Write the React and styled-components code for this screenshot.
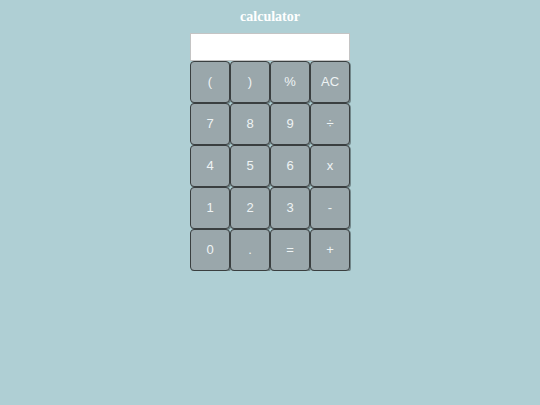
import React from "react";
import styled, { createGlobalStyle } from "styled-components";

const Global = createGlobalStyle`
  html, body { margin: 0; padding: 0; background: #afcfd4; }
  body { font-family: "Liberation Sans", Arial, sans-serif; }
`;

const Page = styled.div`
  display: flex;
  flex-direction: column;
  align-items: center;
  padding-top: 9px;
`;

const Title = styled.h1`
  margin: 0 0 8px 0;
  font-family: "Liberation Serif", "Times New Roman", serif;
  font-weight: bold;
  font-size: 14px;
  line-height: 16px;
  color: #ffffff;
`;

const Calc = styled.div`
  width: 160px;
`;

const Display = styled.div`
  box-sizing: border-box;
  height: 28px;
  background: #ffffff;
  border: 1px solid #c4c4c4;
`;

const Keys = styled.div`
  display: grid;
  grid-template-columns: repeat(4, 40px);
  grid-auto-rows: 42px;
`;

const Key = styled.button`
  box-sizing: border-box;
  width: 40px;
  height: 42px;
  margin: 0;
  padding: 0 0 2px 0;
  background: #9aa7ab;
  border: 1px solid #3a3f40;
  border-radius: 4px;
  box-shadow: 1px 1px 0 rgba(0,0,0,0.35);
  color: #eef3f4;
  font-family: "Liberation Sans", Arial, sans-serif;
  font-size: 13px;
  cursor: pointer;
`;

const keys = ["(", ")", "%", "AC", "7", "8", "9", "÷", "4", "5", "6", "x", "1", "2", "3", "-", "0", ".", "=", "+"];

export default function App() {
  return (
    <>
      <Global />
      <Page>
        <Title>calculator</Title>
        <Calc>
          <Display />
          <Keys>
            {keys.map((k) => (
              <Key key={k}>{k}</Key>
            ))}
          </Keys>
        </Calc>
      </Page>
    </>
  );
}
